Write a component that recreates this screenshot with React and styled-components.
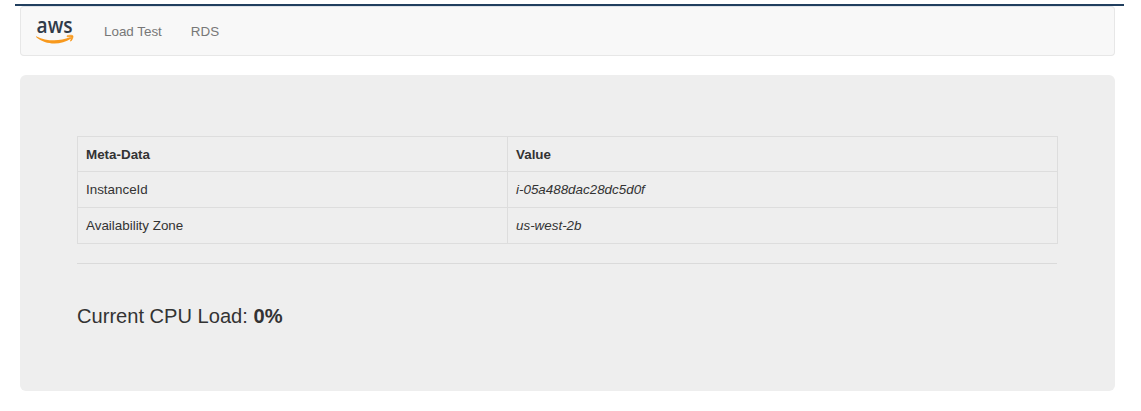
import React from "react";
import styled, { createGlobalStyle } from "styled-components";

const GlobalStyle = createGlobalStyle`
  *, *::before, *::after { box-sizing: border-box; }
  body {
    margin: 0;
    background: #fff;
    color: #333;
    font-family: "Liberation Sans", Arial, sans-serif;
    font-size: 13.4px;
    line-height: 19px;
  }
`;

const Page = styled.div`
  width: 1109px;
  height: 411px;
  margin-left: 15px;
  padding-top: 4px;
`;

const TopRule = styled.div`
  height: 2px;
  background: #213f5f;
`;

const Container = styled.div`
  padding: 0 9px 0 5px;
`;

const Navbar = styled.nav`
  display: flex;
  align-items: center;
  height: 50px;
  padding-left: 15px;
  background: #f8f8f8;
  border: 1px solid #e7e7e7;
  border-top-color: #dfe3e8;
  border-radius: 4px;
`;

const Brand = styled.a`
  display: flex;
  width: 40px;
  height: 32px;
  margin-right: 28px;

  svg { overflow: visible; }
`;

const NavLink = styled.a`
  margin-right: 29px;
  color: #777;
  text-decoration: none;
`;

const Jumbotron = styled.main`
  height: 316px;
  margin-top: 19px;
  padding: 61px 58px 0 57px;
  background: #eee;
  border-radius: 6px;
`;

const Table = styled.table`
  width: 981px;
  table-layout: fixed;
  border-collapse: collapse;
`;

const Cell = styled.td`
  width: ${({ $width }) => $width || "auto"};
  height: ${({ $height }) => $height || "36px"};
  padding: 0 8px;
  border: 1px solid #ddd;
  text-align: left;
  vertical-align: middle;
  font-style: ${({ $italic }) => ($italic ? "italic" : "normal")};
`;

const Divider = styled.hr`
  height: 1px;
  margin: 19px 0 0;
  border: 0;
  background: #dadada;
`;

const Load = styled.p`
  margin: 38px 0 0;
  font-size: 20.1px;
  line-height: 28px;
`;

function AwsLogo() {
  return (
    <svg width="40" height="32" viewBox="0 0 40 32" role="img" aria-label="aws">
      <text
        x="0.6"
        y="18.3"
        fill="#303b49"
        fontFamily='"Open Sans", "Noto Sans", sans-serif'
        fontSize="21.5"
        fontWeight="600"
        textLength="36"
        lengthAdjust="spacingAndGlyphs"
      >
        aws
      </text>
      <path d="M.6 21.4C10.5 26.4 23.5 26.5 34 22.3c1.2-.5 1.9.7.8 1.5C25 30.400 9.700 30.300.3 22.300-.2 21.700 0 21.100.6 21.400Z" fill="#f8991d" />
      <path d="M31 20.800c2.500-.9 5.300-.8 5.900-.1.600.8-.3 3.800-2 5.500l-.5-.3c.5-1.300 1.300-3.300.9-3.800-.5-.6-2.800-.4-4.200-.3Z" fill="#f8991d" stroke="#f8991d" strokeWidth=".6" strokeLinejoin="round" />
    </svg>
  );
}

export default function App() {
  return (
    <>
      <GlobalStyle />
      <Page>
        <TopRule />
        <Container>
          <Navbar>
            <Brand><AwsLogo /></Brand>
            <NavLink>Load Test</NavLink>
            <NavLink>RDS</NavLink>
          </Navbar>
          <Jumbotron>
            <Table>
              <thead>
                <tr>
                  <Cell as="th" $width="430px" $height="35px">Meta-Data</Cell>
                  <Cell as="th" $height="35px">Value</Cell>
                </tr>
              </thead>
              <tbody>
                <tr>
                  <Cell>InstanceId</Cell>
                  <Cell $italic>i-05a488dac28dc5d0f</Cell>
                </tr>
                <tr>
                  <Cell>Availability Zone</Cell>
                  <Cell $italic>us-west-2b</Cell>
                </tr>
              </tbody>
            </Table>
            <Divider />
            <Load>Current CPU Load: <b>0%</b></Load>
          </Jumbotron>
        </Container>
      </Page>
    </>
  );
}
